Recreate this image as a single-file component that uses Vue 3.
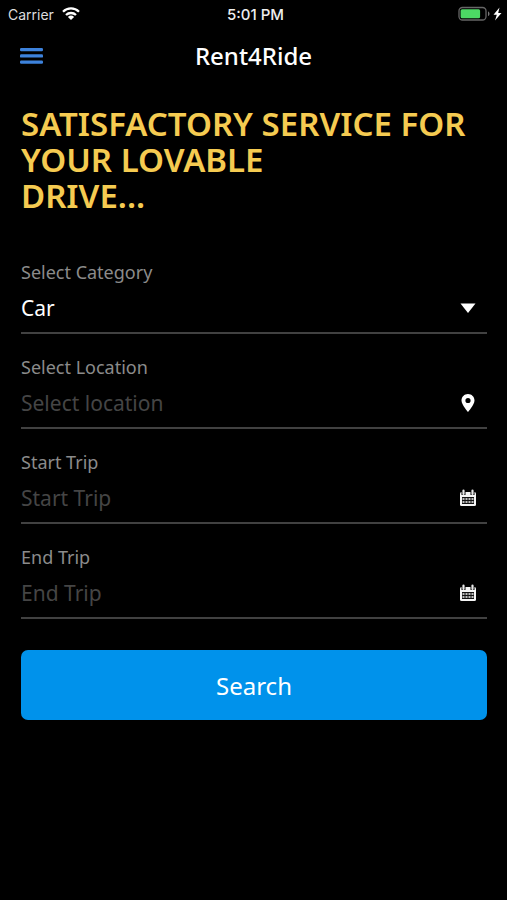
<script setup>
import { ref } from 'vue'

const category = ref('Car')
const place = ref('')
const startTrip = ref('')
const endTrip = ref('')
const columns = [4, 7, 10, 13]
</script>

<template>
  <div class="screen">
    <div class="status">
      <div class="carrier">
        <span>Carrier</span>
        <svg width="18" height="14" viewBox="0 0 18 14" aria-hidden="true">
          <g fill="none" stroke="#fff" stroke-width="2.3">
            <path d="M1 4.7a11.4 11.4 0 0 1 16 0" />
            <path d="M4 8a7.2 7.2 0 0 1 10 0" />
          </g>
          <path d="M5.900 10a4.500 4.500 0 0 1 6.200 0L9 13z" fill="#fff" />
        </svg>
      </div>
      <span class="time">5:01 PM</span>
      <div class="power">
        <svg width="45" height="16" viewBox="0 0 45 16" aria-hidden="true">
          <rect x="1" y="1.500" width="27" height="12.500" rx="3.500" fill="none" stroke="#666" stroke-width="1.300" />
          <rect x="2.600" y="3.200" width="19.500" height="9" rx="1.500" fill="#4cd964" />
          <path d="M30 5.500c2 .6 2 4 0 4.600z" fill="#777" />
          <path d="M41.500 1.500L35.500 8.800h3.300L37 14.500 43.500 7h-3.300z" fill="#fff" />
        </svg>
      </div>
    </div>

    <header class="bar">
      <button class="menu" type="button" aria-label="Menu">
        <svg width="24" height="18" viewBox="0 0 24 18" aria-hidden="true">
          <g fill="#3d82dc">
            <rect y="1" width="23" height="3.300" rx="1.200" />
            <rect y="7.300" width="23" height="3.300" rx="1.200" />
            <rect y="13.500" width="23" height="3.300" rx="1.200" />
          </g>
        </svg>
      </button>
      <h1>Rent4Ride</h1>
    </header>

    <main>
      <h2>SATISFACTORY SERVICE FOR<br />YOUR LOVABLE<br />DRIVE...</h2>

      <form @submit.prevent>
        <div class="field">
          <label for="category">Select Category</label>
          <div class="control">
            <select id="category" v-model="category">
              <option>Car</option>
            </select>
            <svg width="18" height="20" viewBox="0 0 18 20" aria-hidden="true">
              <path d="M1.500 5.500h15L9 15z" fill="#fff" />
            </svg>
          </div>
        </div>
        <div class="field">
          <label for="place">Select Location</label>
          <div class="control">
            <input id="place" v-model="place" type="text" placeholder="Select location" />
            <svg width="18" height="20" viewBox="0 0 18 20" aria-hidden="true">
              <path
                d="M9 1C5.300 1 2.500 3.900 2.500 7.500 2.500 11.800 9 19 9 19s6.500-7.200 6.500-11.500C15.500 3.900 12.700 1 9 1zm0 3.900a2.600 2.600 0 1 1 0 5.200 2.600 2.600 0 0 1 0-5.200z"
                fill="#fff"
                fill-rule="evenodd"
              />
            </svg>
          </div>
        </div>
        <div class="field">
          <label for="start">Start Trip</label>
          <div class="control">
            <input id="start" v-model="startTrip" type="text" placeholder="Start Trip" />
            <svg width="18" height="20" viewBox="0 0 18 20" aria-hidden="true">
              <rect x="1" y="4" width="16" height="14" rx="1.500" fill="#f4f4f4" />
              <path d="M4.500 3v4M13.500 3v4" stroke="#000" stroke-width="4" />
              <path d="M4.500 2.500v3.500M13.500 2.500v3.500" stroke="#e8e8e8" stroke-width="2.200" stroke-linecap="round" />
              <rect x="3" y="9" width="12" height="7" fill="#111" />
              <template v-for="x in columns" :key="x">
                <rect :x="x - 0.5" y="10" width="2" height="2" fill="#bbb" />
                <rect :x="x - 0.5" y="13" width="2" height="2" fill="#bbb" />
              </template>
            </svg>
          </div>
        </div>
        <div class="field">
          <label for="end">End Trip</label>
          <div class="control">
            <input id="end" v-model="endTrip" type="text" placeholder="End Trip" />
            <svg width="18" height="20" viewBox="0 0 18 20" aria-hidden="true">
              <rect x="1" y="4" width="16" height="14" rx="1.500" fill="#f4f4f4" />
              <path d="M4.500 3v4M13.500 3v4" stroke="#000" stroke-width="4" />
              <path d="M4.500 2.500v3.500M13.500 2.500v3.500" stroke="#e8e8e8" stroke-width="2.200" stroke-linecap="round" />
              <rect x="3" y="9" width="12" height="7" fill="#111" />
              <template v-for="x in columns" :key="x">
                <rect :x="x - 0.5" y="10" width="2" height="2" fill="#bbb" />
                <rect :x="x - 0.5" y="13" width="2" height="2" fill="#bbb" />
              </template>
            </svg>
          </div>
        </div>
        <button class="search" type="submit">Search</button>
      </form>
    </main>
  </div>
</template>

<style>
body {
  margin: 0;
  background: #000;
}
</style>

<style scoped>
.screen {
  min-height: 100vh;
  box-sizing: border-box;
  background: #000;
  color: #fff;
  font-family: "Noto Sans", "Open Sans", sans-serif;
}
.status {
  display: grid;
  grid-template-columns: 1fr auto 1fr;
  align-items: center;
  height: 28px;
  padding: 0 4px 0 8px;
  font-family: Inter, Roboto, sans-serif;
  font-size: 14px;
}
.carrier {
  display: flex;
  align-items: center;
  gap: 8px;
  color: #ddd;
}
.time {
  font-size: 15px;
  font-weight: 500;
  color: #eee;
}
.power {
  display: flex;
  justify-content: flex-end;
}
.bar {
  display: grid;
  grid-template-columns: 24px 1fr 24px;
  align-items: center;
  height: 56px;
  padding: 0 20px;
}
.menu {
  display: flex;
  padding: 0;
  border: 0;
  background: none;
}
h1 {
  margin: 0;
  text-align: center;
  font-size: 24px;
  font-weight: 500;
  line-height: 32px;
}
main {
  padding: 22px 20px 22px 21px;
}
h2 {
  margin: 0 0 44px;
  color: #f5cb51;
  font-size: 33px;
  font-weight: 600;
  line-height: 36px;
  white-space: nowrap;
}
.field {
  display: flex;
  flex-direction: column;
  height: 76px;
  margin-bottom: 19px;
  border-bottom: 2px solid #414141;
  box-sizing: border-box;
}
label {
  color: #8b8b8b;
  font-size: 18px;
  line-height: 28px;
}
.control {
  display: flex;
  align-items: center;
  height: 43px;
  padding-right: 10px;
}
.control svg {
  flex: none;
}
select,
input {
  flex: 1;
  min-width: 0;
  height: 36px;
  margin: 0;
  padding: 0;
  border: 0;
  outline: 0;
  background: transparent;
  color: #fff;
  font: inherit;
  font-size: 21px;
  appearance: none;
}
input::placeholder {
  color: #454545;
  opacity: 1;
}
.search {
  display: block;
  width: 100%;
  height: 70px;
  margin-top: 31px;
  border: 0;
  border-radius: 7px;
  background: #0092eb;
  color: #fff;
  font: inherit;
  font-size: 24px;
}
</style>
